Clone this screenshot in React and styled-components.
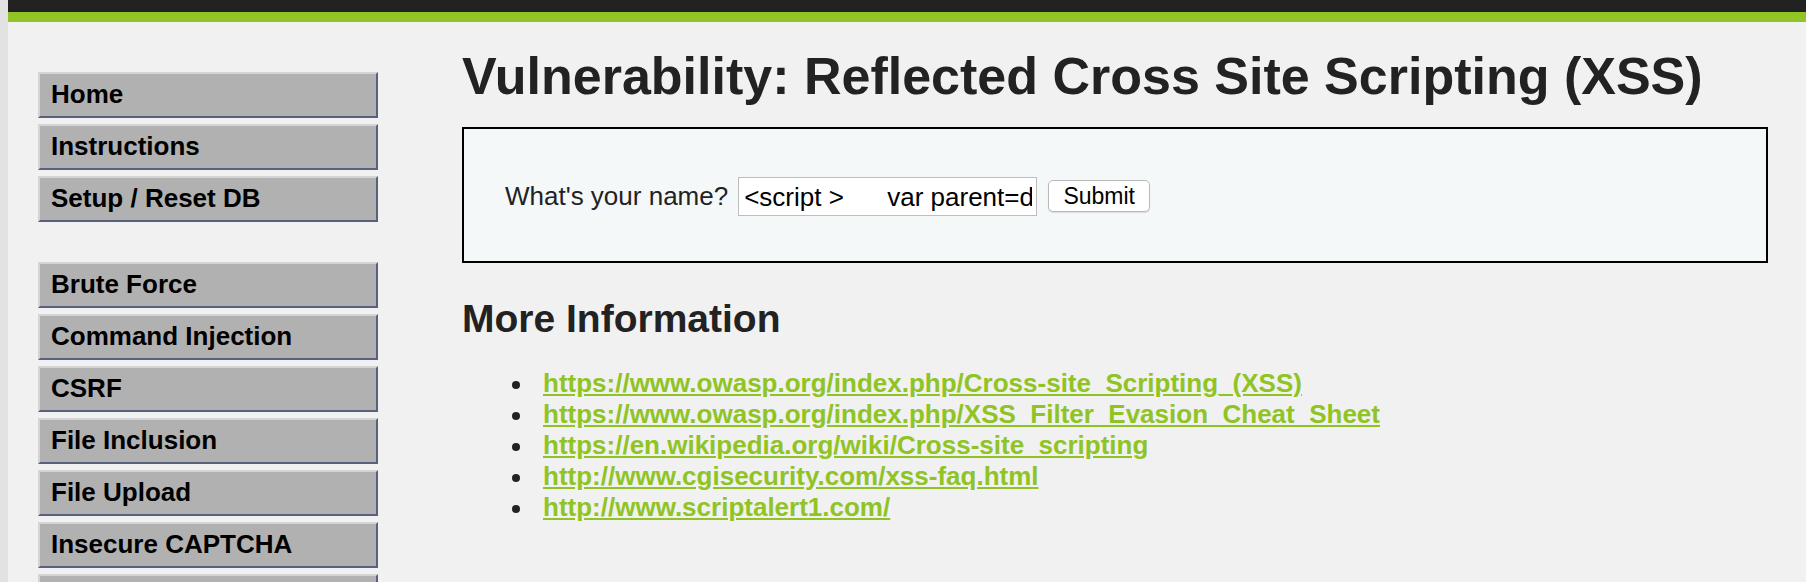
import React from 'react';
import styled, { createGlobalStyle } from 'styled-components';

const GlobalStyle = createGlobalStyle`
  html, body {
    margin: 0;
    padding: 0;
  }

  body {
    background: #e2e2e2;
    font-family: 'Liberation Sans', Arial, sans-serif;
    font-size: 26px;
    color: #222;
    overflow: hidden;
  }
`;

const menuTop = ['Home', 'Instructions', 'Setup / Reset DB'];
// 마지막 항목은 화면 아래로 잘려서 글자가 안 보임
const menuVulns = [
  'Brute Force',
  'Command Injection',
  'CSRF',
  'File Inclusion',
  'File Upload',
  'Insecure CAPTCHA',
  '',
];

const links = [
  'https://www.owasp.org/index.php/Cross-site_Scripting_(XSS)',
  'https://www.owasp.org/index.php/XSS_Filter_Evasion_Cheat_Sheet',
  'https://en.wikipedia.org/wiki/Cross-site_scripting',
  'http://www.cgisecurity.com/xss-faq.html',
  'http://www.scriptalert1.com/',
];

export default function App() {
  return (
    <>
      <GlobalStyle />
      <Container>
        <Header />
        <Body>
          <SideMenu>
            <MenuBlock>
              {menuTop.map((item) => (
                <MenuItem key={item}>{item}</MenuItem>
              ))}
            </MenuBlock>
            <MenuBlock>
              {menuVulns.map((item, i) => (
                <MenuItem key={i}>{item}</MenuItem>
              ))}
            </MenuBlock>
          </SideMenu>

          <Main>
            <Title>Vulnerability: Reflected Cross Site Scripting (XSS)</Title>

            <CodeArea>
              <Form onSubmit={(e) => e.preventDefault()}>
                <Label>What's your name?</Label>
                <NameInput
                  type="text"
                  defaultValue="<script >      var parent=d"
                />
                <SubmitButton type="submit">Submit</SubmitButton>
              </Form>
            </CodeArea>

            <SubTitle>More Information</SubTitle>
            <LinkList>
              {links.map((url) => (
                <LinkItem key={url}>
                  <a href={url}>{url}</a>
                </LinkItem>
              ))}
            </LinkList>
          </Main>
        </Body>
      </Container>
    </>
  );
}

// 링크/헤더 초록 : #91c425
const Container = styled.div`
  height: 582px;
  margin-left: 8px;
  overflow: hidden;
  background: #f1f1f1;
`;

const Header = styled.div`
  height: 12px;
  background: #222222;
  border-bottom: 10px solid #91c425;
`;

const Body = styled.div`
  display: flex;
  padding-left: 30px;
`;

const SideMenu = styled.nav`
  display: flex;
  flex-direction: column;
  gap: 40px;
  width: 340px;
  margin-top: 50px;
`;

const MenuBlock = styled.ul`
  display: flex;
  flex-direction: column;
  gap: 6px;
  margin: 0;
  padding: 0;
  list-style: none;
`;

const MenuItem = styled.li`
  box-sizing: border-box;
  height: 46px;
  padding: 5px 0 0 11px;
  background: #b1b1b1;
  border: 2px solid #d4d4d4;
  border-right-color: #58627a;
  border-bottom-color: #58627a;
  color: #000;
  font-weight: bold;
  font-size: 26px;
  line-height: 30px;
  white-space: nowrap;
`;

const Main = styled.main`
  display: flex;
  flex-direction: column;
  margin-left: 84px;
  width: 1306px;
`;

const Title = styled.h1`
  margin: 24px 0 21px;
  font-size: 52px;
  font-weight: bold;
  color: #222;
  white-space: nowrap;
`;

const CodeArea = styled.div`
  box-sizing: border-box;
  display: flex;
  align-items: center;
  height: 136px;
  padding-left: 41px;
  background: #f5f8f9;
  border: 2px solid #000;
`;

const Form = styled.form`
  display: flex;
  align-items: center;
  margin-top: 2px;
`;

const Label = styled.label`
  margin-right: 10px;
  color: #222;
  font-size: 26px;
`;

const NameInput = styled.input`
  box-sizing: border-box;
  width: 299px;
  height: 39px;
  padding: 2px 4px 0 5px;
  border: 1px solid #bdbdbd;
  background: #fff;
  color: #000;
  font-family: 'Liberation Sans', Arial, sans-serif;
  font-size: 26px;
  outline: none;
`;

const SubmitButton = styled.button`
  box-sizing: border-box;
  width: 102px;
  height: 32px;
  margin-left: 11px;
  padding: 0;
  border: 1px solid #b9b9b9;
  border-radius: 5px;
  background: #fff;
  box-shadow: 0 1px 1px rgba(0, 0, 0, 0.12);
  color: #000;
  font-family: 'Liberation Sans', Arial, sans-serif;
  font-size: 23px;
`;

const SubTitle = styled.h2`
  margin: 34px 0 27px;
  font-size: 39px;
  font-weight: bold;
  color: #222;
`;

const LinkList = styled.ul`
  margin: 0;
  padding-left: 81px;
  list-style: none;
`;

const LinkItem = styled.li`
  position: relative;
  font-size: 26px;

  &::before {
    content: '';
    position: absolute;
    left: -31px;
    top: 13px;
    width: 8px;
    height: 8px;
    border-radius: 50%;
    background: #222;
  }

  a {
    color: #8fc424;
    font-weight: bold;
    text-decoration: underline;
    text-underline-offset: 2px;
  }
`;
